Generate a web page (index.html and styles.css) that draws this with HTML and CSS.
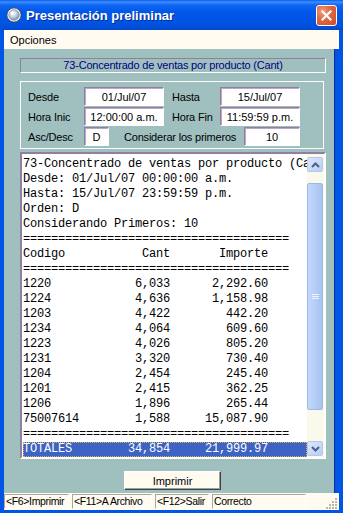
FILE: index.html
```
<!DOCTYPE html>
<html>
<head>
<meta charset="utf-8">
<link rel="stylesheet" href="styles.css">
</head>
<body>
<div class="win">
  <div class="titlebar">
    <svg class="appicon" width="16" height="16" viewBox="0 0 16 16">
      <defs>
        <radialGradient id="g1" cx="40%" cy="35%" r="65%">
          <stop offset="0" stop-color="#ffffff"/>
          <stop offset="0.5" stop-color="#c8d4e4"/>
          <stop offset="1" stop-color="#7d8fb0"/>
        </radialGradient>
      </defs>
      <circle cx="8" cy="8" r="7.2" fill="#e8eef6" stroke="#3a4666" stroke-width="1"/>
      <circle cx="8" cy="8" r="5.2" fill="url(#g1)" stroke="#8a98b8" stroke-width="0.8"/>
      <circle cx="6.5" cy="6" r="1.6" fill="#ffffff" opacity="0.9"/>
    </svg>
    <span class="title">Presentación preliminar</span>
    <div class="close">
      <svg width="19" height="19" viewBox="0 0 19 19">
        <path d="M5.5 5.5 L13.5 13.5 M13.5 5.5 L5.5 13.5" stroke="#ffffff" stroke-width="2.2" stroke-linecap="square"/>
      </svg>
    </div>
  </div>
  <div class="frame">
    <div class="menubar"><span class="menuitem">Opciones</span></div>
    <div class="client">
      <div class="caption">73-Concentrado de ventas por producto (Cant)</div>
      <div class="group">
        <div class="row">
          <span class="lbl lbl-a">Desde</span>
          <span class="field f80">01/Jul/07</span>
          <span class="lbl lbl-b">Hasta</span>
          <span class="field f80">15/Jul/07</span>
        </div>
        <div class="row">
          <span class="lbl lbl-a">Hora Inic</span>
          <span class="field f80">12:00:00 a.m.</span>
          <span class="lbl lbl-b">Hora Fin</span>
          <span class="field f80">11:59:59 p.m.</span>
        </div>
        <div class="row">
          <span class="lbl lbl-a">Asc/Desc</span>
          <span class="field f25">D</span>
          <span class="lbl lbl-c">Considerar los primeros</span>
          <span class="field f56">10</span>
        </div>
      </div>
      <div class="report">
        <div class="lines"><span class="ln">73-Concentrado de ventas por producto (Cant)</span><span class="ln">Desde: 01/Jul/07 00:00:00 a.m.</span><span class="ln">Hasta: 15/Jul/07 23:59:59 p.m.</span><span class="ln">Orden: D</span><span class="ln">Considerando Primeros: 10</span><span class="ln">======================================</span><span class="ln">Codigo           Cant       Importe</span><span class="ln">======================================</span><span class="ln">1220            6,033      2,292.60</span><span class="ln">1224            4,636      1,158.98</span><span class="ln">1203            4,422        442.20</span><span class="ln">1234            4,064        609.60</span><span class="ln">1223            4,026        805.20</span><span class="ln">1231            3,320        730.40</span><span class="ln">1204            2,454        245.40</span><span class="ln">1201            2,415        362.25</span><span class="ln">1206            1,896        265.44</span><span class="ln">75007614        1,588     15,087.90</span><span class="ln">======================================</span><span class="ln sel">TOTALES        34,854     21,999.97</span></div>
        <div class="vscroll">
          <div class="sbtn">
            <svg width="9" height="6" viewBox="0 0 9 6"><path d="M1 5 L4.5 1.5 L8 5" fill="none" stroke="#4d6185" stroke-width="2"/></svg>
          </div>
          <div class="track">
            <div class="thumb">
              <svg width="7" height="7" viewBox="0 0 7 7"><path d="M0 1.5 H7 M0 3.5 H7 M0 5.5 H7" stroke="#eef4ff" stroke-width="1"/></svg>
            </div>
          </div>
          <div class="sbtn">
            <svg width="9" height="6" viewBox="0 0 9 6"><path d="M1 1 L4.5 4.5 L8 1" fill="none" stroke="#4d6185" stroke-width="2"/></svg>
          </div>
        </div>
      </div>
      <div class="btnrow"><div class="btn">Imprimir</div></div>
    </div>
    <div class="status">
      <span class="panel p1">&lt;F6&gt;Imprimir</span>
      <span class="panel p2">&lt;F11&gt;A Archivo</span>
      <span class="panel p3">&lt;F12&gt;Salir</span>
      <span class="panel p4">Correcto</span>
      <svg class="grip" width="12" height="12" viewBox="0 0 12 12">
        <g fill="#b9b6a8">
          <rect x="9" y="1" width="2" height="2"/>
          <rect x="6" y="4" width="2" height="2"/><rect x="9" y="4" width="2" height="2"/>
          <rect x="3" y="7" width="2" height="2"/><rect x="6" y="7" width="2" height="2"/><rect x="9" y="7" width="2" height="2"/>
          <rect x="0" y="10" width="2" height="2"/><rect x="3" y="10" width="2" height="2"/><rect x="6" y="10" width="2" height="2"/><rect x="9" y="10" width="2" height="2"/>
        </g>
      </svg>
    </div>
  </div>
</div>
</body>
</html>
```
FILE: styles.css
```
html, body {
  margin: 0;
  padding: 0;
  background: #ffffff;
}
.win {
  width: 343px;
  height: 513px;
  background: #0055e5;
  display: flex;
  flex-direction: column;
  font-family: "Liberation Sans", Arial, sans-serif;
  font-size: 11px;
  color: #000;
  overflow: hidden;
}
.titlebar {
  height: 30px;
  flex: none;
  display: flex;
  align-items: center;
  background: linear-gradient(to bottom, #0a5cf0 0, #3d8dff 2px, #0f66f2 5px, #0058ea 12px, #0054e3 22px, #004ed8 28px, #0048cc 30px);
  position: relative;
}
.appicon {
  margin-left: 6px;
  flex: none;
}
.title {
  margin-left: 4px;
  color: #fff;
  font-weight: bold;
  font-size: 13px;
  text-shadow: 1px 1px 0 #0a2a8a;
}
.close {
  margin-left: auto;
  margin-right: 6px;
  width: 21px;
  height: 21px;
  box-sizing: border-box;
  border: 1px solid #ffffff;
  border-radius: 3px;
  background: radial-gradient(circle at 30% 30%, #f0a080 0, #e06a44 40%, #cc4a22 100%);
  display: flex;
  align-items: center;
  justify-content: center;
}
.frame {
  flex: 1;
  display: flex;
  flex-direction: column;
  padding: 0 4px 3px 4px;
}
.menubar {
  height: 19px;
  background: #fffbf0;
  display: flex;
  align-items: center;
  flex: none;
}
.menuitem {
  padding-left: 6px;
  font-size: 11px;
}
.client {
  height: 444px;
  flex: none;
  margin-right: 4px;
  border-right: 1px solid #0a2f9a;
  background: #a0c0c0;
  display: flex;
  flex-direction: column;
  align-items: flex-start;
}
.caption {
  margin: 9px 0 0 16px;
  width: 306px;
  height: 15px;
  box-sizing: border-box;
  border: 1px solid;
  border-color: #907fa0 #ffffff #ffffff #907fa0;
  color: #000080;
  text-align: center;
  font-size: 11px;
  letter-spacing: -0.2px;
  line-height: 13px;
}
.group {
  margin: 8px 0 0 16px;
  width: 304px;
  height: 68px;
  box-sizing: border-box;
  border: 1px solid #ffffff;
  padding: 5px 0 0 7px;
  display: flex;
  flex-direction: column;
  gap: 1px;
}
.row {
  display: flex;
  align-items: center;
  height: 19px;
}
.lbl {
  font-size: 11px;
  letter-spacing: -0.2px;
}
.lbl-a { width: 56px; }
.lbl-b { width: 48px; margin-left: 8px; }
.lbl-c { width: 120px; margin-left: 15px; }
.field {
  height: 19px;
  box-sizing: border-box;
  background: #ffffff;
  border: 1px solid;
  border-color: #907fa0 #ffffff #ffffff #907fa0;
  box-shadow: inset 1px 1px 0 #b8a8c4;
  display: flex;
  align-items: center;
  justify-content: center;
  font-size: 11px;
}
.f80 { width: 80px; }
.f25 { width: 25px; }
.f56 { width: 56px; }
.report {
  margin: 3px 0 0 16px;
  width: 306px;
  height: 307px;
  box-sizing: border-box;
  border: 2px solid;
  border-color: #907fa0 #ffffff #ffffff #907fa0;
  background: #ffffff;
  display: flex;
}
.lines {
  flex: 1;
  overflow: hidden;
  padding: 3px 0 0 1px;
  font-family: "Liberation Mono", "Courier New", monospace;
  font-size: 12px;
  letter-spacing: -0.2px;
  white-space: pre;
  display: flex;
  flex-direction: column;
}
.ln {
  display: block;
  height: 15px;
  line-height: 15px;
}
.sel {
  background: #3d63c4;
  color: #ffffff;
  outline: 1px dotted #e0b040;
  outline-offset: -1px;
}
.vscroll {
  width: 17px;
  flex: none;
  background: #fbf8ec;
  display: flex;
  flex-direction: column;
  padding: 3px 1px 1px 0;
  box-sizing: border-box;
}
.sbtn {
  height: 15px;
  box-sizing: border-box;
  border: 1px solid #b2c8ee;
  border-radius: 2px;
  background: linear-gradient(to bottom right, #dbe6fc, #b8cdf6);
  display: flex;
  align-items: center;
  justify-content: center;
  flex: none;
}
.track {
  flex: 1;
  display: flex;
  flex-direction: column;
  padding: 11px 0 31px 0;
}
.thumb {
  flex: 1;
  box-sizing: border-box;
  border: 1px solid #9cb8ea;
  border-radius: 2px;
  background: linear-gradient(to right, #c4d8fa, #a6c2f0);
  display: flex;
  align-items: center;
  justify-content: center;
}
.btnrow {
  margin: 12px 0 0 120px;
}
.btn {
  width: 97px;
  height: 19px;
  box-sizing: border-box;
  background: #fffbf0;
  border: 1px solid;
  border-color: #ffffff #404040 #404040 #ffffff;
  box-shadow: inset -1px -1px 0 #a0a0a0;
  display: flex;
  align-items: center;
  justify-content: center;
  font-size: 11px;
}
.status {
  height: 17px;
  flex: none;
  background: #fffbf0;
  display: flex;
  align-items: flex-start;
  gap: 3px;
  padding-top: 1px;
  box-sizing: border-box;
  position: relative;
}
.panel {
  height: 15px;
  box-sizing: border-box;
  border: 1px solid;
  border-color: #aca899 #ffffff #ffffff #aca899;
  padding-left: 1px;
  font-size: 10.5px;
  line-height: 13px;
  letter-spacing: -0.35px;
  white-space: nowrap;
  overflow: hidden;
}
.p1 { width: 65px; }
.p2 { width: 80px; }
.p3 { width: 54px; }
.p4 { width: 94px; }
.grip {
  position: absolute;
  right: 1px;
  bottom: 1px;
}
```
